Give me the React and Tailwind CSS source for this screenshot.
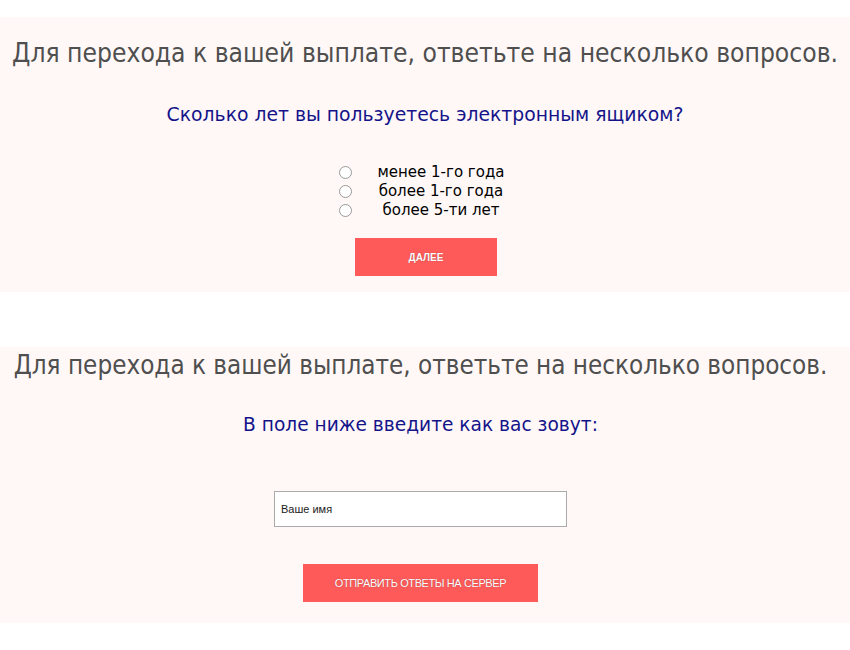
import React, { useState } from 'react';

const heading = 'Для перехода к вашей выплате, ответьте на несколько вопросов.';

const options = ['менее 1-го года', 'более 1-го года', 'более 5-ти лет'];

const Panel = ({ children, className = '' }) => (
  <section className={`bg-[#fff8f7] flex flex-col items-center ${className}`}>{children}</section>
);

const App = () => {
  const [answer, setAnswer] = useState('');
  const [name, setName] = useState('');

  return (
    <div className="w-[850px] h-[650px] bg-white overflow-hidden pt-[17px]">
      {/* Step 1 */}
      <Panel className="h-[275px] pt-[22px]">
        <h1 className="text-[26.2px] leading-[28px] text-[#4f4f4f] whitespace-nowrap" style={{ fontFamily: '"DejaVu Sans Condensed", "DejaVu Sans", sans-serif' }}>
          {heading}
        </h1>
        <p className="mt-[36px] text-[18.8px] leading-[24px] text-[#14148a]" style={{ fontFamily: '"DejaVu Sans", sans-serif' }}>
          Сколько лет вы пользуетесь электронным ящиком?
        </p>
        <div className="mt-[36px] flex flex-col">
          {options.map((opt) => (
            <label key={opt} className="flex items-center h-[19px] cursor-pointer">
              <input
                type="radio"
                name="years"
                checked={answer === opt}
                onChange={() => setAnswer(opt)}
                className="appearance-none w-[13px] h-[13px] rounded-full border border-[#9a9a9a] bg-white checked:bg-[#777] m-0"
              />
              <span className="w-[140px] ml-[19px] text-center text-[15px] leading-[19px] text-black" style={{ fontFamily: '"DejaVu Sans", sans-serif' }}>
                {opt}
              </span>
            </label>
          ))}
        </div>
        <button className="mt-[18px] ml-[2px] w-[142px] h-[38px] bg-[#ff5a5a] text-white text-[10px] font-bold [text-shadow:0_0_1px_rgba(0,0,0,0.4)]" style={{ fontFamily: '"Liberation Sans", Arial, sans-serif' }}>
          ДАЛЕЕ
        </button>
      </Panel>

      <div className="h-[55px]" />

      {/* Step 2 */}
      <Panel className="h-[276px] pt-[4px] pr-[9px]">
        <h1 className="text-[25.8px] leading-[28px] text-[#4f4f4f] whitespace-nowrap" style={{ fontFamily: '"DejaVu Sans Condensed", "DejaVu Sans", sans-serif' }}>
          {heading}
        </h1>
        <p className="mt-[34px] text-[18.6px] leading-[24px] text-[#14148a]" style={{ fontFamily: '"DejaVu Sans", sans-serif' }}>
          В поле ниже введите как вас зовут:
        </p>
        <input
          type="text"
          value={name}
          onChange={(e) => setName(e.target.value)}
          placeholder="Ваше имя"
          className="mt-[54px] w-[293px] h-[36px] border border-[#aaaaaa] bg-white px-[6px] text-[11px] text-[#222] placeholder:text-[#222] outline-none"
          style={{ fontFamily: '"Liberation Sans", Arial, sans-serif' }}
        />
        <button className="mt-[37px] w-[235px] h-[38px] bg-[#ff5a5a] text-white text-[11px] tracking-[-0.4px] [text-shadow:0_0_1px_rgba(0,0,0,0.4)]" style={{ fontFamily: '"Liberation Sans", Arial, sans-serif' }}>
          ОТПРАВИТЬ ОТВЕТЫ НА СЕРВЕР
        </button>
      </Panel>
    </div>
  );
};

export default App;
